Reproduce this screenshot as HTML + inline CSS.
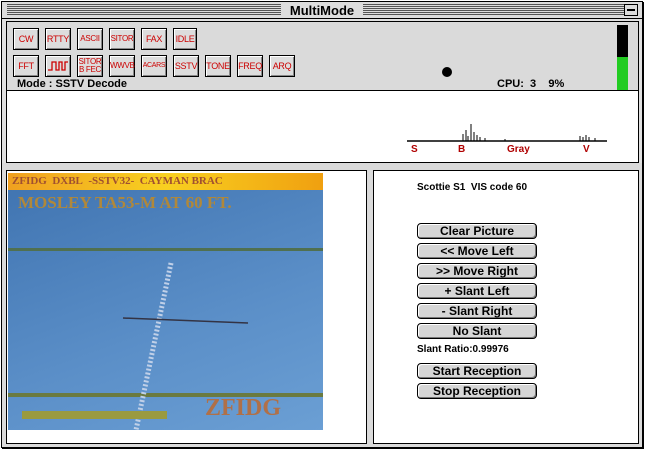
<!DOCTYPE html>
<html><head><style>
*{margin:0;padding:0;box-sizing:border-box}
body{width:648px;height:452px;background:#fff;position:relative;overflow:hidden;font-family:"Liberation Sans",sans-serif}
.a{position:absolute}
.dot{background-color:#e2e2e2;background-image:radial-gradient(#c4c4c4 0.6px,transparent 0.8px);background-size:2px 2px}
.tb{position:absolute;width:26px;height:22px;border:1px solid #000;background:#ddd;box-shadow:inset 1px 1px 0 #fff,inset -1px -1px 0 #888;color:#c00;font:9px "Liberation Sans",sans-serif;text-align:center;line-height:20px;letter-spacing:-0.3px}
.btn{position:absolute;left:417px;width:120px;height:16px;border:1px solid #000;border-radius:4px;background:#d6d6d6;box-shadow:inset 1px 1px 0 #fff,inset -1px -1px 0 #777;font:bold 12px "Liberation Sans",sans-serif;text-align:center;line-height:14px;color:#000}
.t{position:absolute;font:bold 10px "Liberation Sans",sans-serif;color:#000;white-space:nowrap}
.r{position:absolute;font:bold 10px "Liberation Sans",sans-serif;color:#b00000}
</style></head><body>
<div class="a" style="left:1px;top:1px;width:642px;height:447px;border:1px solid #000;background:#e0e0e0;box-shadow:1px 1px 0 #000"></div>
<div class="a" style="left:2px;top:2px;width:640px;height:17px;background:#ddd;border-bottom:1px solid #000"></div>
<div class="a" style="left:7px;top:4px;width:630px;height:12px;background:repeating-linear-gradient(#555 0 1px,#ddd 1px 2px)"></div>
<div class="a" style="left:281px;top:2px;width:82px;height:16px;background:#ddd;font:bold 13px 'Liberation Sans',sans-serif;text-align:center;line-height:17px">MultiMode</div>
<div class="a" style="left:624px;top:4px;width:14px;height:12px;background:#ddd;border:1px solid #000"><div class="a" style="left:2px;top:4px;width:8px;height:2px;border-top:1px solid #000;border-bottom:1px solid #000"></div></div>
<div class="a dot" style="left:6px;top:21px;width:633px;height:70px;border:1px solid #000"></div>
<div class="tb" style="left:13px;top:28px">CW</div>
<div class="tb" style="left:45px;top:28px">RTTY</div>
<div class="tb" style="left:77px;top:28px;font-size:8px">ASCII</div>
<div class="tb" style="left:109px;top:28px;font-size:8px">SITOR</div>
<div class="tb" style="left:141px;top:28px">FAX</div>
<div class="tb" style="left:173px;top:28px;width:24px">IDLE</div>
<div class="tb" style="left:13px;top:55px">FFT</div>
<div class="tb" style="left:45px;top:55px"><svg width="22" height="14" style="margin-top:3px"><path d="M1 11H5V3H9V11H12V3H15V11H18V3H21" fill="none" stroke="#c00" stroke-width="1.3"/></svg></div>
<div class="tb" style="left:77px;top:55px;line-height:8px;padding-top:2px;font-size:8px">SITOR<br>B FEC</div>
<div class="tb" style="left:109px;top:55px;font-size:8px">WWVB</div>
<div class="tb" style="left:141px;top:55px;font-size:7px">ACARS</div>
<div class="tb" style="left:173px;top:55px">SSTV</div>
<div class="tb" style="left:205px;top:55px">TONE</div>
<div class="tb" style="left:237px;top:55px">FREQ</div>
<div class="tb" style="left:269px;top:55px">ARQ</div>
<div class="t" style="left:17px;top:78px;font-size:11px">Mode : SSTV Decode</div>
<div class="a" style="left:442px;top:67px;width:10px;height:10px;border-radius:50%;background:#000"></div>
<div class="t" style="left:497px;top:78px;font-size:11px">CPU:&nbsp; 3&nbsp;&nbsp;&nbsp; 9%</div>
<div class="a" style="left:617px;top:25px;width:11px;height:32px;background:#000"></div>
<div class="a" style="left:617px;top:57px;width:11px;height:33px;background:#22cc22"></div>
<div class="a" style="left:6px;top:91px;width:633px;height:72px;background:#fff;border-left:1px solid #000;border-right:1px solid #000;border-bottom:1px solid #000"></div>
<svg class="a" style="left:405px;top:120px" width="205" height="24"><path d="M2 21H202" stroke="#000" stroke-width="1.5"/><path d="M58 21V14M61 21V10M63 21V16M66 21V4M69 21V12M72 21V15M75 21V17M80 21V18M100 21V19M175 21V16M178 21V17M181 21V15M184 21V17M190 21V18" stroke="#000"/></svg>
<div class="r" style="left:411px;top:144px">S</div>
<div class="r" style="left:458px;top:144px">B</div>
<div class="r" style="left:507px;top:144px">Gray</div>
<div class="r" style="left:583px;top:144px">V</div>
<div class="a dot" style="left:2px;top:163px;width:640px;height:284px"></div>
<div class="a" style="left:6px;top:170px;width:361px;height:274px;background:#fff;border:1px solid #000"></div>
<div class="a" style="left:373px;top:170px;width:266px;height:274px;background:#fff;border:1px solid #000"></div>
<div class="a" style="left:8px;top:173px;width:315px;height:257px;background:linear-gradient(160deg,#3f73b0,#5b8fc8 60%,#6b9fd4)"></div>
<div class="a" style="left:8px;top:173px;width:315px;height:17px;background:linear-gradient(90deg,#f0a020,#f8d020 50%,#f0a010);font:bold 11px 'Liberation Serif',serif;color:#a05030;line-height:17px;padding-left:4px;white-space:nowrap">ZFIDG &nbsp;DXBL&nbsp; -SSTV32- &nbsp;CAYMAN BRAC</div>
<div class="a" style="left:18px;top:193px;font:bold 17px 'Liberation Serif',serif;color:#b0883a;white-space:nowrap">MOSLEY TA53-M AT 60 FT.</div>
<div class="a" style="left:8px;top:248px;width:315px;height:3px;background:#507050"></div>
<div class="a" style="left:8px;top:393px;width:315px;height:4px;background:#6a7a40"></div>
<svg class="a" style="left:8px;top:173px" width="315" height="257"><path d="M163 90L128 257" stroke="#c0d0e8" stroke-width="5" stroke-dasharray="2 2"/><path d="M115 145L240 150" stroke="#334" stroke-width="1.5"/></svg>
<div class="a" style="left:205px;top:395px;font:bold 24px 'Liberation Serif',serif;color:#b07048">ZFIDG</div>
<div class="a" style="left:22px;top:411px;width:145px;height:8px;background:#9a9a40"></div>
<div class="t" style="left:417px;top:182px">Scottie S1&nbsp; VIS code 60</div>
<div class="btn" style="top:223px">Clear Picture</div>
<div class="btn" style="top:243px">&lt;&lt; Move Left</div>
<div class="btn" style="top:263px">&gt;&gt; Move Right</div>
<div class="btn" style="top:283px">+ Slant Left</div>
<div class="btn" style="top:303px">- Slant Right</div>
<div class="btn" style="top:323px">No Slant</div>
<div class="t" style="left:417px;top:344px">Slant Ratio:0.99976</div>
<div class="btn" style="top:363px">Start Reception</div>
<div class="btn" style="top:383px">Stop Reception</div>
</body></html>
